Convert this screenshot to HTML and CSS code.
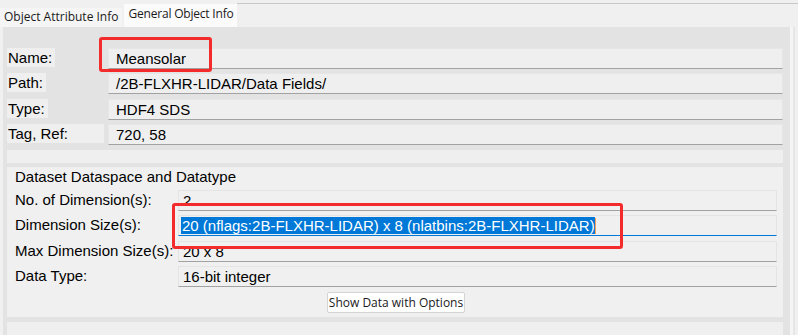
FILE: index.html
```html
<!DOCTYPE html>
<html lang="en">
<head>
  <meta charset="UTF-8">
  <title>General Object Info</title>
  <meta name="viewport" content="width=device-width, initial-scale=1.0">
  <link rel="stylesheet" href="styles.css">
</head>
<body>
  <div class="tabs">
    <div class="tab">Object Attribute Info</div>
    <div class="tab active">General Object Info</div>
    <div class="tab-rest"></div>
  </div>

  <div class="content">
    <div class="general">
      <span class="label">Name:</span>
      <div class="field">Meansolar</div>
      <span class="label">Path:</span>
      <div class="field">/2B-FLXHR-LIDAR/Data Fields/</div>
      <span class="label">Type:</span>
      <div class="field">HDF4 SDS</div>
      <span class="label wide">Tag, Ref:</span>
      <div class="field">720, 58</div>
    </div>

    <div class="blank"></div>

    <div class="dataset">
      <div class="title">Dataset Dataspace and Datatype</div>
      <div class="dims">
        <span class="dlabel">No. of Dimension(s):</span>
        <div class="field">2</div>
        <span class="dlabel">Dimension Size(s):</span>
        <div class="field focused"><span class="selected">20 (nflags:2B-FLXHR-LIDAR) x 8 (nlatbins:2B-FLXHR-LIDAR)</span><span class="caret"></span></div>
        <span class="dlabel">Max Dimension Size(s):</span>
        <div class="field">20 x 8</div>
        <span class="dlabel">Data Type:</span>
        <div class="field">16-bit integer</div>
      </div>
      <div class="actions">
        <button>Show Data with Options</button>
      </div>
    </div>

    <div class="more"></div>

    <div class="mark mark-name"></div>
    <div class="mark mark-dims"></div>
  </div>
</body>
</html>
```

FILE: styles.css
```css
body {
  margin: 0;
  background-color: #f0f0f0;
  font-family: "Liberation Sans", Arial, sans-serif;
  font-size: 15px;
  color: #000000;
  height: 335px;
  overflow: hidden;
}
.tabs {
  display: flex;
  height: 27px;
  font-family: "Open Sans", "Noto Sans", sans-serif;
  font-size: 12px;
  color: #1a1a1a;
}
.tab {
  margin-top: 8px;
  padding: 0 4px 0 4px;
  background-color: #f5f5f5;
  line-height: 18px;
}
.tab.active {
  margin-top: 4px;
  margin-left: 2px;
  padding: 0 3px 0 4px;
  letter-spacing: -0.2px;
  background-color: #fbfbfb;
  line-height: 20px;
}
.tab-rest {
  flex: 1;
  margin-top: 3px;
  border-top: 1px solid #c8c8c8;
}
.content {
  position: relative;
  box-sizing: border-box;
  margin-left: 3px;
  width: 787px;
  height: 308px;
  padding: 21px 7px 0 4px;
  background-color: #e3e3e3;
  box-shadow: 3px 0 0 #f5f5f5, 5px 0 0 #e6e6e6;
}
.general {
  display: grid;
  grid-template-columns: 97px 1fr;
  column-gap: 4px;
  row-gap: 4.35px;
}
.label {
  justify-self: start;
  height: 19px;
  box-sizing: border-box;
  padding: 1px 3px 0 1px;
  line-height: 17px;
  background-color: #efefef;
}
.label.wide {
  justify-self: stretch;
}
.field {
  height: 21px;
  box-sizing: border-box;
  padding: 1px 7px 0;
  line-height: 17px;
  white-space: nowrap;
  background-color: #efefef;
  border: 1px solid #e6e6e6;
  border-bottom-color: #a2a2a2;
}
.blank {
  height: 13px;
  margin: 5px 0 4px 0;
  background-color: #efefef;
}
.dataset {
  padding: 1px 6px 4px 8px;
  background-color: #f0f0f0;
}
.title {
  line-height: 17px;
  margin-bottom: 5px;
}
.dims {
  display: grid;
  grid-template-columns: 159px 1fr;
  column-gap: 4px;
  row-gap: 4.35px;
}
.dlabel {
  padding-top: 1px;
  line-height: 17px;
}
.dims .field {
  padding-left: 4px;
  background-color: #f0f0f0;
  border-color: #e4e4e4;
  border-bottom-color: #a2a2a2;
}
.dims .field.focused {
  padding-left: 2px;
  border-bottom: 1px solid #0078d7;
}
.selected {
  display: inline-block;
  padding: 0 0 0 1px;
  background-color: #0078d7;
  color: #ffffff;
}
.caret {
  display: inline-block;
  width: 1px;
  height: 16px;
  vertical-align: -3px;
  background-color: #f5a25a;
}
.actions {
  display: flex;
  justify-content: center;
  margin-top: 5px;
}
button {
  height: 21px;
  padding: 0 1px;
  font-family: "Open Sans", "Noto Sans", sans-serif;
  font-size: 12px;
  color: #1a1a1a;
  background-color: #ffffff;
  border: 1px solid #d4d4d4;
  border-radius: 2px;
}
.more {
  height: 20px;
  margin-top: 5px;
  background-color: #efefef;
}
.mark {
  position: absolute;
  border: 3px solid #f42b2b;
  border-radius: 3px;
}
.mark-name {
  left: 96px;
  top: 10px;
  width: 107px;
  height: 29px;
}
.mark-dims {
  left: 169px;
  top: 176px;
  width: 445px;
  height: 40px;
}
```
